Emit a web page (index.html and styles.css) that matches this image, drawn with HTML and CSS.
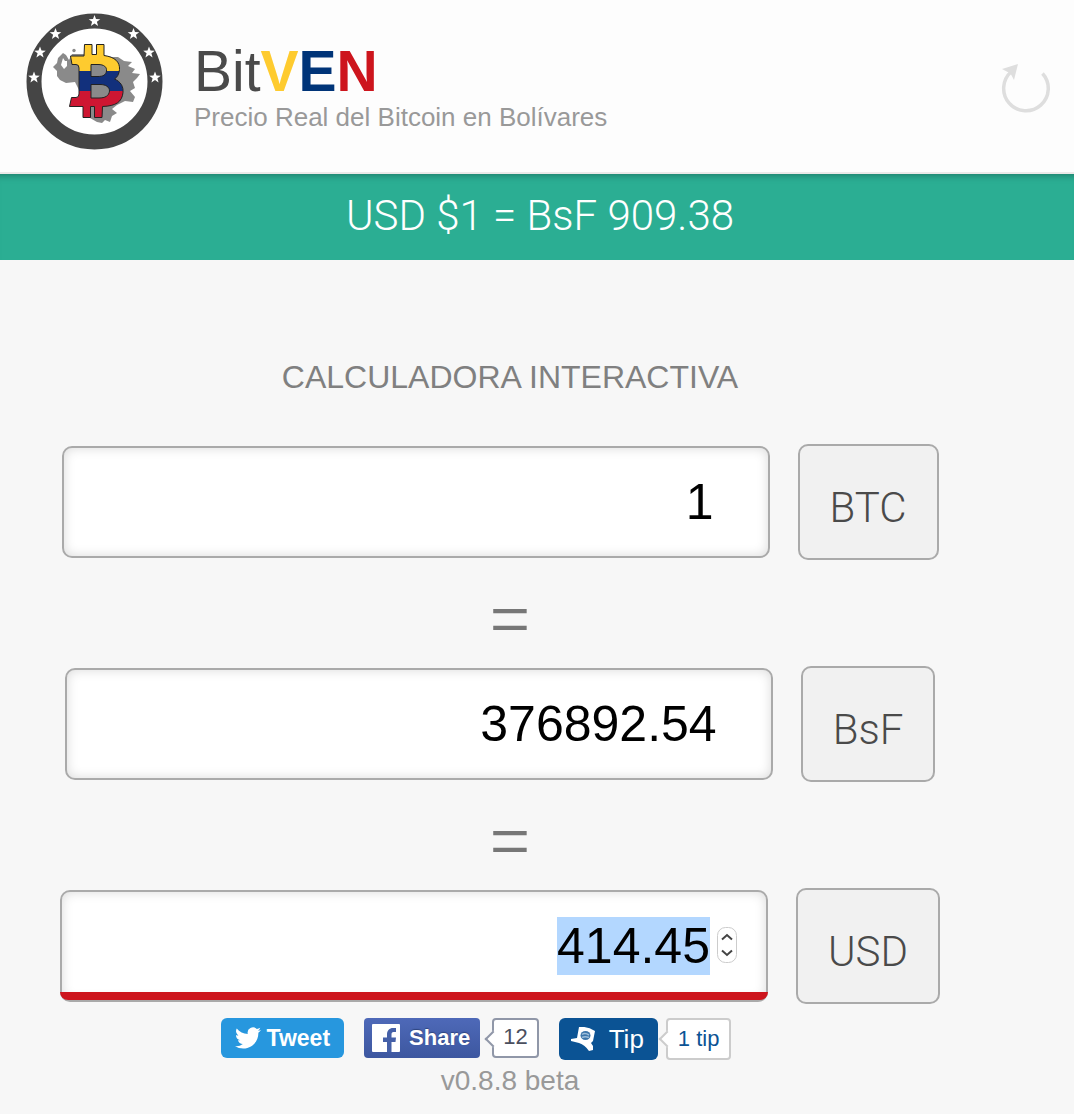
FILE: index.html
```
<!DOCTYPE html>
<html lang="es">
  <head>
    <meta charset="UTF-8" />
    <meta name="viewport" content="width=device-width, initial-scale=1.0" />
    <title>BitVEN</title>
    <link rel="stylesheet" href="styles.css">
  </head>
  <body>
    <header class="header">
      <svg class="logo" viewBox="0 0 160 160" aria-hidden="true">
        <defs>
          <path id="star" d="M0-6 L1.5-1.9 5.8-1.8 2.4.8 3.6 5 0 2.5-3.6 5-2.4.8-5.8-1.8-1.5-1.9Z" fill="#fff" />
          <path id="coin" d="M70.5 44.5H78V54.5H82.5V44.5H90V55.5C101 57 106 62 105.5 69.5 105 74.5 103 77.5 100.5 79 107 82 109.5 86.5 109 92.5 108 102 102 106 88.5 106.5L88 117.5H80.5V106.5H76.5V117.5H69V106.5H55.5L57.5 97.5H62Q65 97.5 65 94V68Q65 64.5 62 64.5H58L56.5 56H70Z" />
          <clipPath id="coin-clip">
            <use href="#coin" />
          </clipPath>
        </defs>
        <circle cx="80.5" cy="81.5" r="60.5" fill="#fff" stroke="#454545" stroke-width="15" />
        <use href="#star" x="80.5" y="21" />
        <use href="#star" x="41.5" y="34" />
        <use href="#star" x="119.5" y="34" />
        <use href="#star" x="26" y="52.5" />
        <use href="#star" x="135" y="52.5" />
        <use href="#star" x="20" y="77.5" />
        <use href="#star" x="141" y="77.5" />
        <!-- map -->
        <path d="M49 53 44 58 43 63 39 67 43 71 43 76 46 80 52 83 61 82 65 90 69 107 76 118 83 122 88 123 91 120 96 122 98 116 103 113 98 109 103 105 111 101 119 102 121 97 116 91 121 88 119 82 123 78 126 74 118 73 121 69 114 66 118 62 110 61 104 57 98 57 88 55 70 54 58 54 55 60 52 55Z" fill="#8a8a8a" />
        <path d="M49 58 51 61 53 61 53 66 50 69 47 65Z" fill="#fff" />
        <circle cx="60" cy="50.5" r="1.7" fill="#8a8a8a" />
        <!-- coin symbol in the flag colours -->
        <g clip-path="url(#coin-clip)">
          <rect x="54" y="43" width="58" height="28" fill="#fecb2f" />
          <rect x="54" y="71" width="58" height="20" fill="#12307c" />
          <rect x="54" y="91" width="58" height="28" fill="#ce1632" />
        </g>
        <use href="#coin" fill="none" stroke="#222" />
        <path d="M77 64.5H84C90 64.5 93 67 92.5 71 92 75 89 76.5 84 76.5H77ZM77 84.5H86C92 84.5 95.5 87 95.5 91 95 96 91 98 85 98H77Z" fill="#8a8a8a" stroke="#222" />
      </svg>
      <div class="brand">
        <h1 class="brand-name">Bit<b class="yellow">V</b><b class="blue">E</b><b class="red">N</b></h1>
        <p class="tagline">Precio Real del Bitcoin en Bolívares</p>
      </div>
      <button class="refresh" type="button" aria-label="Actualizar">
        <svg viewBox="0 0 52 52" aria-hidden="true">
          <path d="M42.5 12.5A22.3 22.3 0 1 1 11.5 10.5" fill="none" stroke="#dedede" stroke-width="3.5" />
          <path d="M18 3 14 19 10.5 12.5 2 8Z" fill="#dedede" />
        </svg>
      </button>
    </header>

    <div class="rate">USD $1 = BsF 909.38</div>

    <main class="calculator">
      <h2 class="title">Calculadora interactiva</h2>
      <form>
        <div class="row">
          <div class="field">
            <input type="number" id="btc" name="btc" value="1" step="any" />
          </div>
          <label class="unit" for="btc">BTC</label>
        </div>
        <div class="equals">=</div>
        <div class="row">
          <div class="field">
            <input type="number" id="bsf" name="bsf" value="376892.54" step="any" />
          </div>
          <label class="unit" for="bsf">BsF</label>
        </div>
        <div class="equals">=</div>
        <div class="row">
          <div class="field active">
            <input type="number" id="usd" name="usd" value="414.45" step="any" />
            <svg class="stepper" viewBox="0 0 22 40" aria-hidden="true">
              <rect x="1.5" y="2.5" width="19" height="35" rx="8" fill="#fff" stroke="#ccc" />
              <path d="M6 14.5 11 10 16 14.5M6 25.5 11 30 16 25.5" fill="none" stroke="#444" stroke-width="2" />
            </svg>
          </div>
          <label class="unit" for="usd">USD</label>
        </div>
      </form>

      <div class="social">
        <button class="btn tweet" type="button">
          <svg width="26" height="26" viewBox="0 0 24 24" aria-hidden="true">
            <path fill="#fff" d="M23.95 4.57a10 10 0 0 1-2.82.77 4.96 4.96 0 0 0 2.16-2.72 9.9 9.9 0 0 1-3.13 1.18 4.92 4.92 0 0 0-8.38 4.48C7.69 8.09 4.07 6.13 1.64 3.16a4.92 4.92 0 0 0 1.52 6.57 4.9 4.9 0 0 1-2.23-.61v.06a4.92 4.92 0 0 0 3.95 4.83 5 5 0 0 1-2.21.08 4.94 4.94 0 0 0 4.6 3.42A9.87 9.87 0 0 1 0 19.54a13.94 13.94 0 0 0 7.55 2.21c9.05 0 14-7.5 14-13.98 0-.21 0-.42-.02-.63a9.94 9.94 0 0 0 2.42-2.57z" />
          </svg>
          Tweet
        </button>
        <button class="btn share" type="button">
          <svg width="28" height="28" viewBox="0 0 28 28" aria-hidden="true">
            <rect width="28" height="28" rx="1" fill="#fff" />
            <path d="M15 28V18H11V13.5H15V10.5C15 6.5 17.5 4 21 4H24V8H21.5C20 8 19.5 9 19.5 10.5V13.5H24L23.5 18H19.5V28Z" fill="#4560a8" />
          </svg>
          Share
        </button>
        <a class="count share-count" href="#">12</a>
        <button class="btn tip" type="button">
          <svg width="24" height="24" viewBox="0 0 24 24" aria-hidden="true">
            <path d="M8 0Q16-1 24 4L22 14 20 16 22 19V23L18 24Q14 18 8 16L0 14V12L6 11Z" fill="#fff" />
            <ellipse cx="14.5" cy="8.5" rx="5" ry="4.5" fill="#3c76aa" />
            <path d="M11 7.5Q14 5.5 18 8M11 10.5Q14 9 18 10.5" fill="none" stroke="#9dbdd9" stroke-width="1.5" />
          </svg>
          Tip
        </button>
        <a class="count tip-count" href="#">1 tip</a>
      </div>
      <p class="version">v0.8.8 beta</p>
    </main>
    <script src="script.js"></script>
  </body>
</html>
```

FILE: styles.css
```
* {
  box-sizing: border-box;
}

body {
  margin: 0;
  background: #f7f7f7;
  color: #4a4a4a;
  font-family: "Liberation Sans", Arial, sans-serif;
}

h1,
h2,
p {
  margin: 0;
  font-weight: normal;
}

button {
  border: 0;
  font-family: inherit;
  cursor: pointer;
}

.header {
  display: flex;
  align-items: center;
  height: 174px;
  padding: 0 22px 12px 14px;
  background: #fdfdfd;
  border-bottom: 2px solid #ebe9e8;
}

.logo {
  width: 160px;
  height: 160px;
  margin-right: 20px;
}

.brand {
  flex: 1;
  padding-top: 14px;
}

.brand-name {
  font-size: 57px;
  line-height: 60px;
}

.yellow {
  color: #fecb2f;
}

.blue {
  color: #003478;
}

.red {
  color: #cd151d;
}

.tagline {
  color: #999;
  font-size: 26px;
  line-height: 32px;
}

.refresh {
  width: 52px;
  height: 52px;
  margin-top: 14px;
  padding: 0;
  background: none;
}

.rate {
  padding: 18px 0 20px 6px;
  background: #2bae93;
  box-shadow: inset 0 8px 8px -8px rgba(0, 0, 0, 0.4);
  color: #fff;
  font-family: Roboto, sans-serif;
  font-size: 42px;
  font-weight: 300;
  line-height: 48px;
  text-align: center;
}

.calculator {
  padding: 96px 54px 12px 0;
  text-align: center;
}

.title {
  margin-bottom: 46px;
  color: #808080;
  font-size: 32px;
  line-height: 42px;
  text-transform: uppercase;
}

.row {
  display: flex;
  align-items: center;
  justify-content: center;
  gap: 28px;
  padding: 0 20px 0 0;
}

.field {
  position: relative;
  width: 708px;
}

.field input {
  display: block;
  width: 100%;
  height: 112px;
  padding: 0 54px 0 20px;
  border: 2px solid #aaa;
  border-radius: 10px;
  outline: none;
  background: #fff;
  box-shadow: inset 0 0 12px rgba(0, 0, 0, 0.15);
  color: #000;
  font-family: inherit;
  font-size: 50px;
  text-align: right;
  appearance: textfield;
}

.field input::-webkit-inner-spin-button {
  display: none;
}

.field input::selection {
  background: #b3d7ff;
  color: #000;
}

.active input {
  padding-right: 56px;
}

/* red bar along the bottom of the field being edited */
.active::after {
  content: "";
  position: absolute;
  left: 0;
  right: 0;
  bottom: 2px;
  height: 8px;
  border-radius: 0 0 10px 10px;
  background: #cd151d;
}

.stepper {
  position: absolute;
  top: 35px;
  right: 30px;
  width: 22px;
  height: 40px;
}

.unit {
  height: 116px;
  padding: 6px 30px 0;
  border: 2px solid #aaa;
  border-radius: 10px;
  background: #f1f1f1;
  font-family: Roboto, sans-serif;
  font-size: 42px;
  font-weight: 300;
  line-height: 112px;
}

.equals {
  height: 106px;
  color: #777;
  font-family: Roboto, sans-serif;
  font-size: 82px;
  font-weight: 300;
  line-height: 118px;
}

.social {
  display: flex;
  justify-content: center;
  padding: 14px 68px 0 0;
}

.btn {
  display: flex;
  align-items: center;
  height: 40px;
  margin-right: 20px;
  padding: 0 14px;
  border-radius: 6px;
  color: #fff;
  font-size: 22px;
}

.tweet {
  gap: 6px;
  background: #2797de;
  font-size: 23px;
  font-weight: bold;
}

.share {
  gap: 9px;
  margin-right: 12px;
  padding: 0 10px 0 8px;
  border-radius: 4px;
  background: linear-gradient(#4e69b8, #3d57a0);
  font-weight: bold;
  text-shadow: 0 -1px 1px #2f457f;
}

.tip {
  gap: 14px;
  height: 42px;
  margin-right: 8px;
  padding: 0 14px 0 12px;
  background: #0b5394;
  font-size: 26px;
}

.count {
  position: relative;
  height: 40px;
  padding: 0 9px;
  border: 2px solid #9097a8;
  border-radius: 4px;
  background: #fff;
  color: #4b4f5e;
  font-size: 22px;
  line-height: 34px;
  text-decoration: none;
}

/* pointer on the left edge of the bubble */
.count::before {
  content: "";
  position: absolute;
  top: 13px;
  left: -7px;
  width: 10px;
  height: 10px;
  border: solid #9097a8;
  border-width: 0 0 2px 2px;
  background: #fff;
  transform: rotate(45deg);
}

.share-count {
  margin-right: 20px;
}

.tip-count {
  height: 42px;
  padding: 0 10px;
  border-color: #ccc;
  color: #0b5394;
  line-height: 38px;
}

.tip-count::before {
  border-color: #ccc;
}

.version {
  color: #999;
  font-size: 28px;
  line-height: 42px;
}
```

FILE: script.js
```
const usd = document.querySelector("#usd");
usd.focus();
usd.select();
```
